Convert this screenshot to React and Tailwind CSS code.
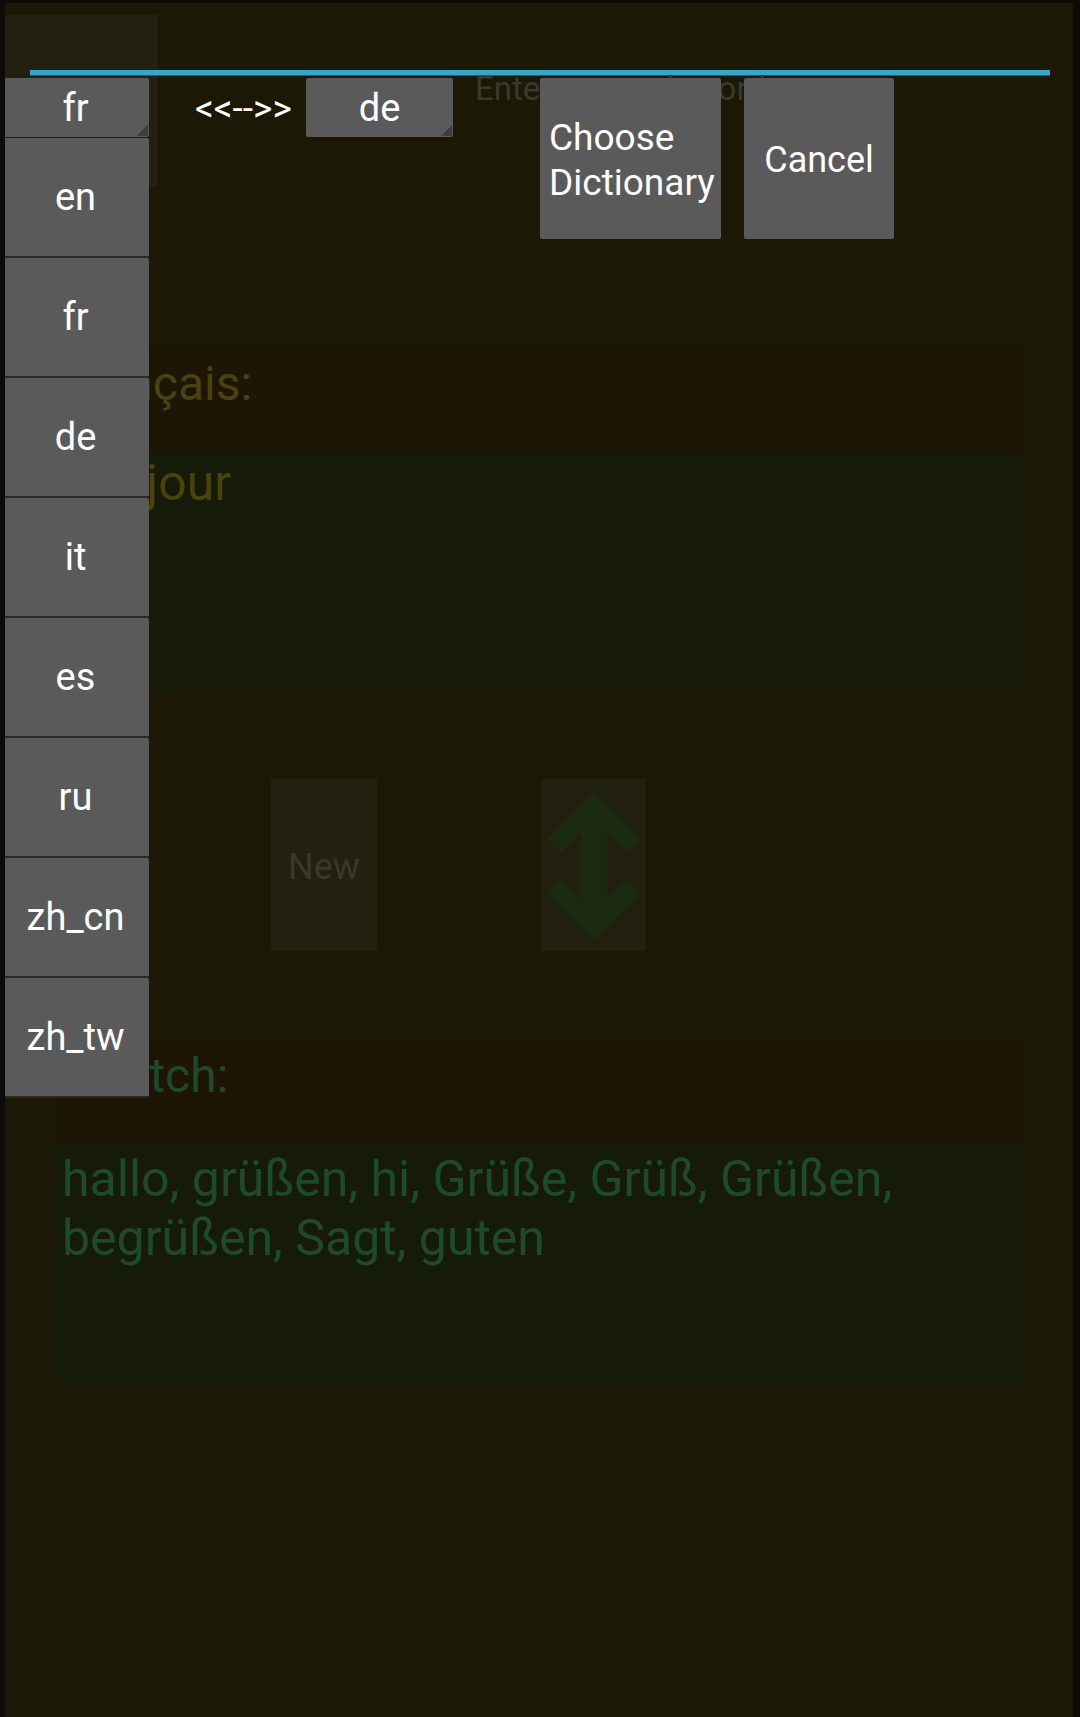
import React from 'react';

const languages = ['en', 'fr', 'de', 'it', 'es', 'ru', 'zh_cn', 'zh_tw'];

function Spinner({ label, className = '' }) {
  return (
    <div className={`relative flex h-[59px] w-[147px] items-center justify-center rounded-[2px] bg-[#5a5a5a] pt-[2px] text-[38px] text-white ${className}`}>
      {label}
      {/* little corner mark of the spinner */}
      <div className="absolute bottom-[1px] right-[1px] h-[11px] w-[11px] bg-[linear-gradient(135deg,transparent_50%,#3e3e3e_50%)]" />
    </div>
  );
}

function Panel({ label, text, textColor, className = '', labelClass = '', textClass = '' }) {
  return (
    <div className={`ml-[51px] w-[969px] ${className}`}>
      <div className={`h-[103px] bg-[#1d1604] text-[48px] ${textColor} ${labelClass}`}>{label}</div>
      <div className={`h-[241px] bg-[#151b08] pl-[6px] pr-[30px] ${textColor} ${textClass}`}>{text}</div>
    </div>
  );
}

export default function App() {
  return (
    <div className="relative h-[1717px] w-[1080px] overflow-hidden border-l-[5px] border-r-[7px] border-t-[3px] border-[#0d0b09] bg-[#1b1805] font-['Roboto',sans-serif]">
      {/* faint pressed highlight behind the top-left spinner */}
      <div className="absolute left-[-3px] top-[12px] h-[172px] w-[156px] bg-[#23200f]" />

      <div className="relative">
        {/* search field underline */}
        <div className="ml-[25px] mt-[67px] h-[6px] w-[1020px] border-b border-[#1d5f75] bg-[#33a8cf]" />

        {/* language spinners + action buttons */}
        <div className="mt-[2px] flex h-[161px] items-start">
          <Spinner label="fr" className="-ml-[3px]" />
          <div className="flex h-[59px] w-[157px] items-center pl-[46px] pt-[3px] text-[37px] text-white">&lt;&lt;--&gt;&gt;</div>
          <Spinner label="de" />
          <div className="ml-[22px] grid">
            <div className="col-start-1 row-start-1 -mt-[14px] whitespace-nowrap text-[33px] text-[#3a392b]">
              Enter a search word
            </div>
            <div className="col-start-1 row-start-1 ml-[65px] flex gap-[23px]">
              <button className="flex h-[161px] w-[181px] items-center rounded-[2px] bg-[#5a5a5a] pl-[9px] pt-[3px] text-left text-[37px] leading-[45px] text-white">
                Choose
                <br />
                Dictionary
              </button>
              <button className="flex h-[161px] w-[150px] items-center justify-center rounded-[2px] bg-[#5a5a5a] pt-[2px] text-[36px] text-white">
                Cancel
              </button>
            </div>
          </div>
        </div>

        <Panel
          label="Français:"
          text="bonjour"
          textColor="text-[#4a430c]"
          className="mt-[109px]"
          labelClass="pl-[3px]"
          textClass="pt-[3px] text-[50px] leading-[59px]"
        />

        {/* new / swap buttons */}
        <div className="mt-[87px] flex h-[172px]">
          <div className="ml-[266px] flex w-[106px] items-center justify-center bg-[#22200f] pt-[4px] text-[36px] text-[#3a3828]">New</div>
          <div className="ml-[164px] w-[105px] bg-[#22200f]">
            <svg width="105" height="172" viewBox="0 0 105 172">
              <g fill="none" stroke="#1a2b11" strokeLinejoin="miter">
                <line x1="53" y1="36" x2="53" y2="138" strokeWidth="26" />
                <polyline points="13,67 53,27 93,67" strokeWidth="19" />
                <polyline points="13,107 53,147 93,107" strokeWidth="19" />
              </g>
            </svg>
          </div>
        </div>

        <Panel
          label="Deutch:"
          text="hallo, grüßen, hi, Grüße, Grüß, Grüßen, begrüßen, Sagt, guten"
          textColor="text-[#1e4a2c]"
          className="mt-[89px]"
          labelClass="pl-[10px]"
          textClass="pt-[7px] text-[50px] leading-[59px]"
        />
      </div>

      {/* open dropdown of the first spinner */}
      <div className="absolute left-[-3px] top-[135px] flex w-[147px] flex-col">
        {languages.map((lang) => (
          <div
            key={lang}
            className="flex h-[120px] items-center justify-center rounded-[2px] border-b-2 border-[#2a2a26] bg-[#5a5a5a] text-[38px] text-white"
          >
            {lang}
          </div>
        ))}
      </div>
    </div>
  );
}
